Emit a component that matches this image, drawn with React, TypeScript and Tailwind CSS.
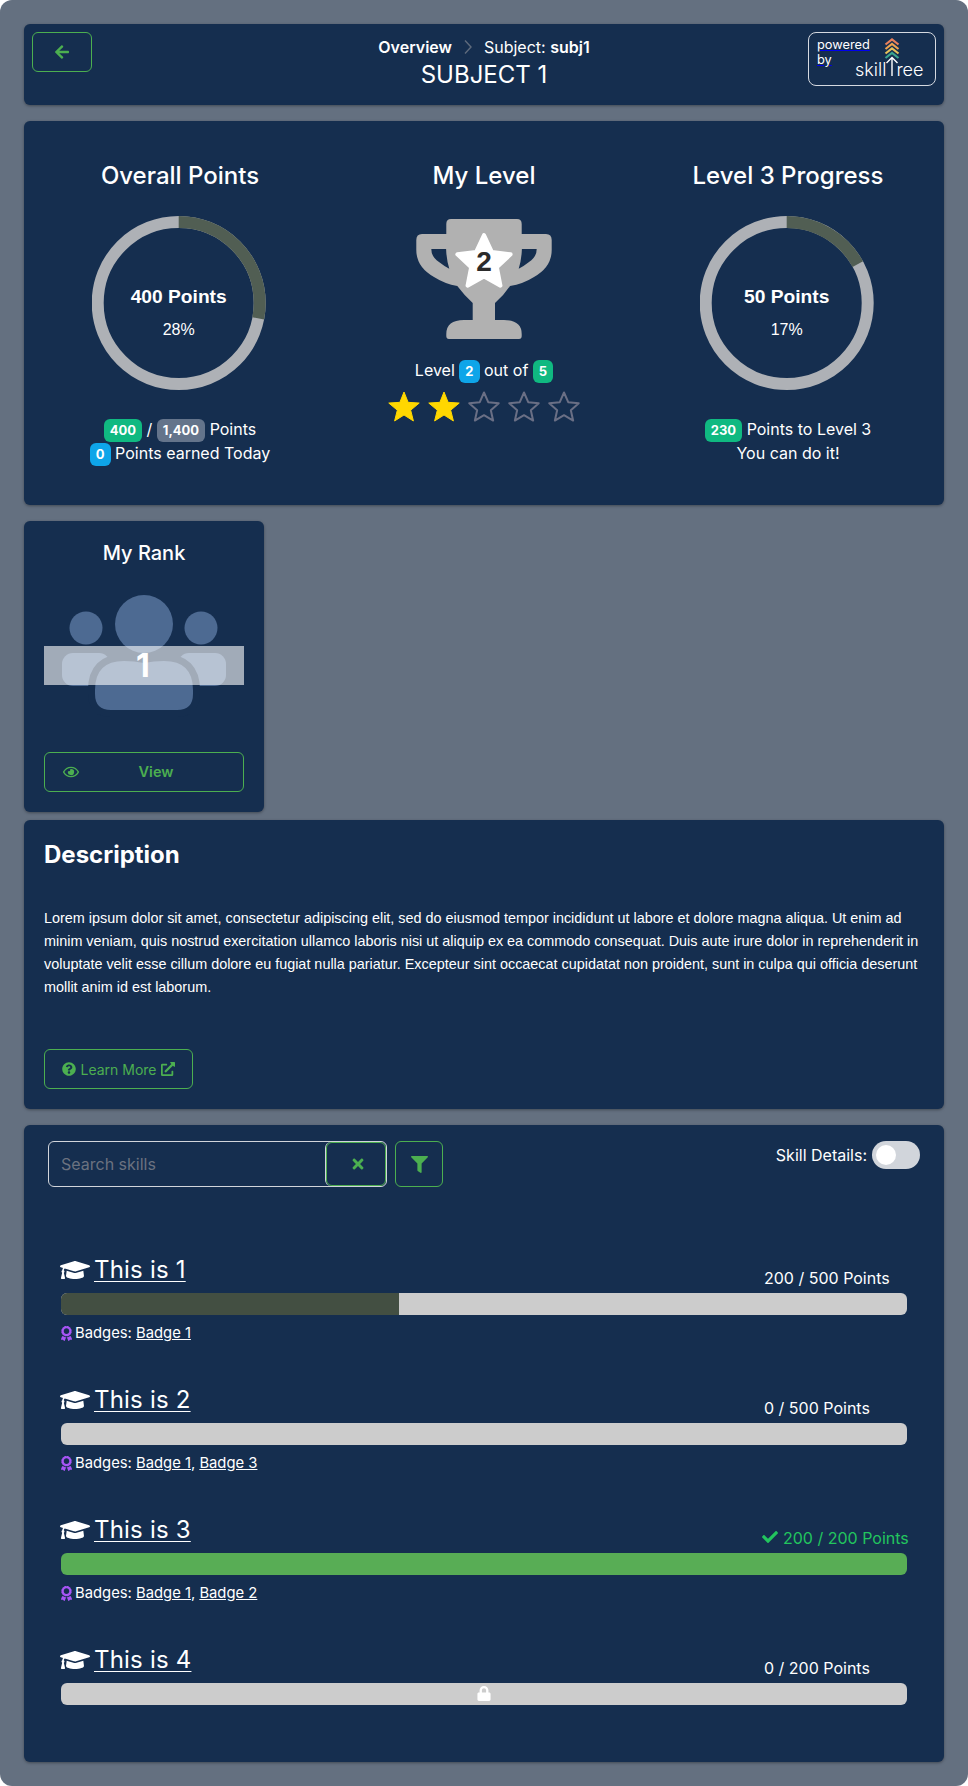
import { ReactNode } from "react";
import {
  FaArrowLeft,
  FaAward,
  FaCheck,
  FaExternalLinkAlt,
  FaFilter,
  FaGraduationCap,
  FaLock,
  FaQuestionCircle,
  FaRegEye,
  FaTimes,
} from "react-icons/fa";

const starPoints = (cx: number, cy: number, R: number, r: number) => {
  const pts: string[] = [];
  for (let i = 0; i < 10; i++) {
    const rad = i % 2 === 0 ? R : r;
    const a = (Math.PI / 5) * i - Math.PI / 2;
    pts.push(`${(cx + rad * Math.cos(a)).toFixed(2)},${(cy + rad * Math.sin(a)).toFixed(2)}`);
  }
  return pts.join(" ");
};

const Card = ({ className, children }: { className?: string; children: ReactNode }) => (
  <div className={`rounded-md bg-[#152e4f] shadow-[0_1px_3px_rgba(0,0,0,0.35)] ${className ?? ""}`}>{children}</div>
);

const Badge = ({ color, children }: { color: string; children: ReactNode }) => (
  <span className={`inline-flex h-[23px] items-center justify-center rounded-md px-[6px] align-middle text-[13px] font-bold text-white ${color}`}>
    {children}
  </span>
);

const Ring = ({ percent, points }: { percent: number; points: number }) => {
  const r = 81;
  const c = 2 * Math.PI * r;
  return (
    <svg width="176" height="176" viewBox="0 0 176 176" className="mx-auto">
      <circle cx="86.7" cy="87" r={r} fill="none" stroke="#aeb1b6" strokeWidth="12" />
      <circle
        cx="86.7"
        cy="87"
        r={r}
        fill="none"
        stroke="#515e53"
        strokeWidth="12"
        strokeDasharray={`${(c * percent) / 100} ${c}`}
        transform="rotate(-90 86.7 87)"
      />
      <text x="86.7" y="86.5" textAnchor="middle" fill="#fff" fontSize="19.2" fontWeight="700" fontFamily="Liberation Sans, sans-serif">
        {points} Points
      </text>
      <text x="86.7" y="118.5" textAnchor="middle" fill="#fff" fontSize="16" fontFamily="Liberation Sans, sans-serif">
        {percent}%
      </text>
    </svg>
  );
};

const Trophy = () => (
  <svg width="160" height="140" viewBox="-1 0 160 140" className="mx-auto">
    <path
      fillRule="evenodd"
      fill="#b1b1b1"
      d="M46 9H112Q116.7 9 116.7 14V24H141Q146.7 24 146.7 30V40Q146.7 57 129 67Q118 74 105 76Q99 85 90 93V110H99Q116.7 110 116.7 124V126Q116.7 129 114 129H44Q41.3 129 41.3 126V124Q41.3 110 59 110H67.7V93Q59 85 52.3 76Q40 74 29 67Q11.3 57 11.3 40V30Q11.3 24 17 24H41.3V14Q41.3 9 46 9Z
      M116.9 39H131.7Q131.7 47 124 52Q119 56 113.7 58.7Q116.5 50 116.9 39Z
      M41.1 39H26.3Q26.3 47 34 52Q39 56 44.3 58.7Q41.5 50 41.1 39Z"
    />
    <polygon points={starPoints(79, 53, 28, 13.5)} fill="#fff" stroke="#fff" strokeWidth="4" strokeLinejoin="round" />
    <text x="79" y="61" textAnchor="middle" fontSize="28" fontWeight="700" fill="#2b2b2b" fontFamily="Liberation Sans, sans-serif">
      2
    </text>
  </svg>
);

const Star = ({ filled }: { filled: boolean }) => (
  <svg width="32" height="32" viewBox="0 0 32 32">
    {filled ? (
      <polygon points={starPoints(16, 17, 16, 7)} fill="#ffd700" stroke="#ffd700" strokeWidth="1" strokeLinejoin="round" />
    ) : (
      <polygon points={starPoints(16, 17, 15.5, 7.2)} fill="none" stroke="#6a6f85" strokeWidth="2" strokeLinejoin="round" />
    )}
  </svg>
);

const RankIcon = () => (
  <svg width="200" height="140" viewBox="0 0 200 140">
    <circle cx="42" cy="38" r="16.5" fill="#4d6a92" />
    <circle cx="157" cy="38" r="16.5" fill="#4d6a92" />
    <rect x="18" y="63" width="48" height="33" rx="11" fill="#4d6a92" />
    <rect x="134" y="63" width="48" height="33" rx="11" fill="#4d6a92" />
    <path
      d="M51 104V100Q51 71 80 71Q90 71 100 73Q110 71 120 71Q149 71 149 100V104Q149 120 133 120H67Q51 120 51 104Z"
      fill="#4d6a92"
      stroke="#152e4f"
      strokeWidth="14"
      paintOrder="stroke"
    />
    <circle cx="100" cy="34" r="29" fill="#4d6a92" />
  </svg>
);

const Logo = () => (
  <div className="relative h-[54px] w-[128px] rounded-lg border border-[#d5d9e0]">
    <div className="absolute left-2 top-[4px] text-[12.8px] leading-[15px] text-white">
      <div className="w-fit underline decoration-[#0000ee]">powered</div>
      <div className="w-fit underline decoration-[#0000ee]">by</div>
    </div>
    <svg width="16" height="38" viewBox="0 0 16 38" className="absolute left-[75px] top-[5px]" fill="none" strokeWidth="2.2">
      <path d="M1.5 6.5L8 1.5L14.5 6.5" stroke="#e9805b" />
      <path d="M1.5 11L8 6L14.5 11" stroke="#eda24f" />
      <path d="M1.5 15.5L8 10.5L14.5 15.5" stroke="#e6c05a" />
      <path d="M1.5 20L8 15L14.5 20" stroke="#3aa58f" />
      <path d="M2.5 25L8 19.5L13.5 25M8 19.5V38" stroke="#ffffff" strokeWidth="1.4" />
    </svg>
    <div className="absolute left-[46px] top-[25px] flex text-[18px] font-light leading-[24px] text-white">
      <span>skill</span>
      <span className="ml-[10px]">ree</span>
    </div>
  </div>
);

const skills = [
  { name: "This is 1", points: "200 / 500 Points", fill: "w-[40%] bg-[#434f42]", badges: ["Badge 1"] },
  { name: "This is 2", points: "0 / 500 Points", fill: "w-0", badges: ["Badge 1", "Badge 3"] },
  { name: "This is 3", points: "200 / 200 Points", fill: "w-full bg-[#58ad55]", badges: ["Badge 1", "Badge 2"], done: true },
  { name: "This is 4", points: "0 / 200 Points", fill: "w-0", badges: [], locked: true },
];

const SkillRow = ({ skill }: { skill: (typeof skills)[number] }) => (
  <div className="h-[130px]">
    <div className="flex h-10 items-start justify-between">
      <div className="mt-[1px] flex h-8 items-center text-white">
        <FaGraduationCap className="mr-[4px] -ml-[1px] text-[30px]" />
        <span className="text-[24px] leading-8 tracking-[0.2px] underline decoration-1 underline-offset-[3px]">{skill.name}</span>
      </div>
      <div className={`mt-[13px] w-[143px] whitespace-nowrap text-[16px] leading-6 ${skill.done ? "text-[#22c55e]" : "text-white"}`}>
        {skill.done && <FaCheck className="mr-[5px] -ml-[2px] inline align-[-1px] text-[16px]" />}
        {skill.points}
      </div>
    </div>
    <div className="relative h-[22px] overflow-hidden rounded-md bg-[#cccccc]">
      <div className={`h-full ${skill.fill}`} />
      {skill.locked && <FaLock className="absolute left-1/2 top-[3px] -translate-x-1/2 text-[15px] text-white" />}
    </div>
    {skill.badges.length > 0 && (
      <div className="-ml-[2px] mt-2 flex h-5 items-center text-[14.8px] text-white">
        <FaAward className="mr-[1px] text-[15px] text-[#a855f7]" />
        <span>
          Badges:{" "}
          {skill.badges.map((b, i) => (
            <span key={b}>
              {i > 0 && ", "}
              <span className="underline">{b}</span>
            </span>
          ))}
        </span>
      </div>
    )}
  </div>
);

export default function App() {
  return (
    <div className="flex h-[1786px] flex-col rounded-xl bg-[#647080] p-6 font-[Inter,sans-serif]">
      <Card className="grid h-[81px] grid-cols-[1fr_auto_1fr] px-2 pt-2">
        <button className="flex h-10 w-[60px] items-center justify-center rounded-md border border-[#4caf50] text-[#4caf50]">
          <FaArrowLeft className="text-[16px]" />
        </button>
        <div className="text-center text-white">
          <div className="flex h-[30px] items-center justify-center text-[16px]">
            <span className="font-semibold">Overview</span>
            <svg width="12" height="16" viewBox="0 0 12 16" fill="none" className="mx-[10px]" stroke="#5f6b7c" strokeWidth="1.4">
              <path d="M3 1.5L9 8L3 14.5" />
            </svg>
            <span>
              Subject: <span className="font-semibold">subj1</span>
            </span>
          </div>
          <div className="-mt-[3px] text-[24px] leading-8">SUBJECT 1</div>
        </div>
        <div className="flex justify-end">
          <Logo />
        </div>
      </Card>

      <Card className="mt-4 grid h-[384px] grid-cols-3 px-1 pt-[39px] text-center text-white">
        <div>
          <h2 className="text-[24px] font-medium leading-8">Overall Points</h2>
          <div className="mt-6">
            <Ring percent={28} points={400} />
          </div>
          <div className="mt-[26px] text-[16px] leading-[23px]">
            <div>
              <Badge color="bg-[#10b981]">400</Badge> / <Badge color="bg-[#64748b]">1,400</Badge> Points
            </div>
            <div>
              <Badge color="bg-[#0ea5e9]">0</Badge> Points earned Today
            </div>
          </div>
        </div>
        <div>
          <h2 className="text-[24px] font-medium leading-8">My Level</h2>
          <div className="mt-[18px]">
            <Trophy />
          </div>
          <div className="mt-[9px] text-[16px] leading-[23px]">
            Level <Badge color="bg-[#0ea5e9]">2</Badge> out of <Badge color="bg-[#10b981]">5</Badge>
          </div>
          <div className="mt-[8px] flex justify-center gap-2">
            {[true, true, false, false, false].map((filled, i) => (
              <Star key={i} filled={filled} />
            ))}
          </div>
        </div>
        <div>
          <h2 className="text-[24px] font-medium leading-8">Level 3 Progress</h2>
          <div className="mt-6">
            <Ring percent={17} points={50} />
          </div>
          <div className="mt-[26px] text-[16px] leading-[23px]">
            <div>
              <Badge color="bg-[#10b981]">230</Badge> Points to Level 3
            </div>
            <div>You can do it!</div>
          </div>
        </div>
      </Card>

      <Card className="mt-4 h-[291px] w-[240px] px-5 pt-[18px]">
        <h2 className="text-center text-[20px] font-medium leading-7 text-white">My Rank</h2>
        <div className="relative mt-[23px] h-[140px]">
          <RankIcon />
          <div className="absolute inset-x-0 top-[56px] flex h-[39px] items-center justify-center bg-white/60 pr-[2px] text-[32px] font-bold text-white">
            1
          </div>
        </div>
        <button className="mt-[22px] flex h-10 w-full items-center rounded-md border border-[#4caf50] px-[18px] text-[14.5px] font-semibold text-[#4caf50]">
          <FaRegEye className="text-[16px]" />
          <span className="flex-1 pl-[8px] text-center">View</span>
        </button>
      </Card>

      <Card className="mt-2 h-[289px] pl-5 pr-[10px] pt-[19px]">
        <h2 className="text-[24px] font-bold leading-8 text-white">Description</h2>
        <p className="mt-[36px] font-['Liberation_Sans',sans-serif] text-[14.4px] leading-[23px] text-white">
          Lorem ipsum dolor sit amet, consectetur adipiscing elit, sed do eiusmod tempor incididunt ut labore et dolore magna aliqua. Ut enim ad minim veniam, quis nostrud exercitation ullamco laboris nisi ut aliquip ex ea commodo consequat. Duis aute irure dolor in reprehenderit in voluptate velit esse cillum dolore eu fugiat nulla pariatur. Excepteur sint occaecat cupidatat non proident, sunt in culpa qui officia deserunt mollit anim id est laborum.
        </p>
        <button className="mt-[50px] flex h-10 w-[149px] items-center justify-center gap-1 rounded-md border border-[#4caf50] text-[14px] text-[#4caf50]">
          <FaQuestionCircle className="text-[14px]" />
          Learn More
          <FaExternalLinkAlt className="text-[14px]" />
        </button>
      </Card>

      <Card className="mt-4 h-[637px] px-[37px] pt-4">
        <div className="-mx-[13px] flex items-start justify-between">
          <div className="flex gap-2">
            <div className="flex h-[46px] w-[339px] rounded-md border border-[#d1d5db]">
              <input
                placeholder="Search skills"
                className="min-w-0 flex-1 bg-transparent px-3 text-[16px] text-white outline-none placeholder:text-[#6b7280]"
              />
              <button className="flex w-[61px] items-center justify-center rounded-md border-l border-[#d1d5db]">
                <span className="flex h-full w-full items-center justify-center rounded-md border border-[#4caf50] pl-1 text-[#4caf50]">
                  <FaTimes className="text-[16px]" />
                </span>
              </button>
            </div>
            <button className="flex h-[46px] w-[48px] items-center justify-center rounded-md border border-[#4caf50] text-[#4caf50]">
              <FaFilter className="text-[17px]" />
            </button>
          </div>
          <div className="flex items-center gap-[5px] text-[16px] text-white">
            <span>Skill Details:</span>
            <span className="flex h-7 w-12 items-center rounded-full bg-[#d1d5db] px-1">
              <span className="h-5 w-5 rounded-full bg-white" />
            </span>
          </div>
        </div>
        <div className="mt-[66px]">
          {skills.map((s) => (
            <SkillRow key={s.name} skill={s} />
          ))}
        </div>
      </Card>
    </div>
  );
}
